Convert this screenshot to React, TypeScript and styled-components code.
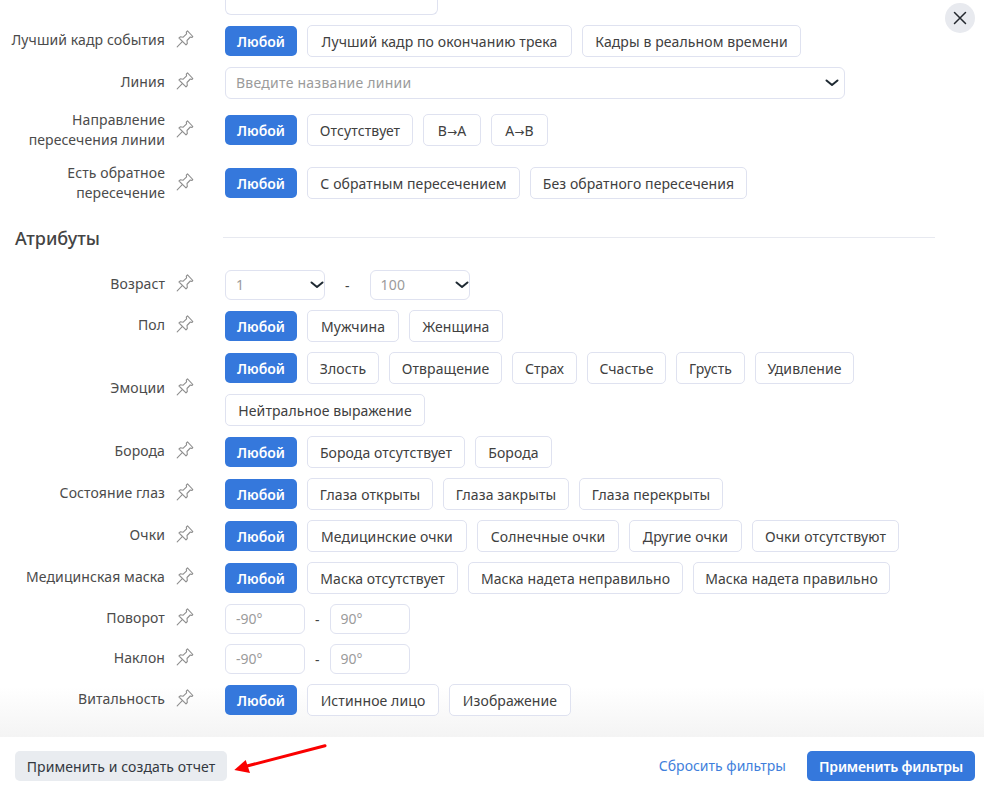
import React from "react";
import styled, { createGlobalStyle } from "styled-components";

const Global = createGlobalStyle`
  html, body { margin: 0; padding: 0; height: 100%; background: #fff; overflow: hidden; }
  body { font-family: "Noto Sans", "Open Sans", sans-serif; font-size: 14px; color: #444; }
  #root { height: 100%; }
  * { box-sizing: border-box; }
`;

const Page = styled.div`
  position: relative;
  width: 984px;
  height: 795px;
  display: flex;
  flex-direction: column;
`;
const Body = styled.div`
  position: relative;
  isolation: isolate;
  height: 737px;
  overflow: hidden;
  display: flex;
  flex-direction: column;
  gap: 10px;
`;
const Fade = styled.div`
  position: absolute;
  z-index: -1;
  left: 0;
  right: 0;
  bottom: 0;
  height: 50px;
  background: linear-gradient(to bottom, rgba(244, 244, 244, 0), #f4f4f4);
  pointer-events: none;
`;
const ClippedField = styled.div`
  width: 213px;
  height: 15px;
  margin-left: 225px;
  border: 1px solid #dfe2f0;
  border-top: none;
  border-radius: 0 0 6px 6px;
`;
const Row = styled.div<{ $top?: number }>`
  display: flex;
  align-items: center;
  min-height: 30px;
  margin-top: ${(p) => p.$top ?? 0}px;
`;
const Label = styled.div<{ $two?: boolean }>`
  width: 165px;
  flex: none;
  text-align: right;
  line-height: 20px;
  letter-spacing: 0.1px;
  color: #4b4b4b;
  position: relative;
  top: ${(p) => (p.$two ? "0" : "-1px")};
`;
const PinWrap = styled.span<{ $two?: boolean }>`
  width: 60px;
  flex: none;
  padding-left: 11px;
  display: flex;
  align-items: center;
  position: relative;
  top: ${(p) => (p.$two ? "-1px" : "-2px")};
`;
const Controls = styled.div`
  display: flex;
  flex-wrap: wrap;
  align-items: center;
  gap: 10px;
  width: 700px;
`;
const Chip = styled.button<{ $active?: boolean; $w: number }>`
  width: ${(p) => p.$w}px;
  height: ${(p) => (p.$active ? "30px" : "32px")};
  padding: 0;
  border: ${(p) => (p.$active ? "none" : "1px solid #dfe2f0")};
  border-radius: 5px;
  background: ${(p) => (p.$active ? "#3578dc" : "#fff")};
  color: ${(p) => (p.$active ? "#fff" : "#404040")};
  font: ${(p) => (p.$active ? 600 : 400)} 14px "Noto Sans", sans-serif;
  letter-spacing: ${(p) => (p.$active ? "0" : "0.1px")};
  white-space: nowrap;
`;
const ArrowGlyph = styled.span`
  font-family: "DejaVu Sans", sans-serif;
  font-size: 12px;
`;
const SelectBox = styled.div<{ $w: number; $h: number; $inset: number }>`
  position: relative;
  display: flex;
  align-items: center;
  width: ${(p) => p.$w}px;
  height: ${(p) => p.$h}px;
  padding: 0 0 2px 10px;
  border: 1px solid #dfe2f0;
  border-radius: 6px;
  color: #9b9b9b;
  letter-spacing: 0.25px;
  white-space: nowrap;

  svg {
    position: absolute;
    right: ${(p) => p.$inset}px;
    top: 50%;
    transform: translateY(-50%);
  }
`;
const AngleInput = styled.input`
  width: 80px;
  height: 30px;
  padding: 0 10px 2px;
  border: 1px solid #dfe2f0;
  border-radius: 6px;
  font: 14px "Noto Sans", sans-serif;
  &::placeholder { color: #9b9b9b; opacity: 1; }
`;
const RangeGroup = styled.div<{ $gap: number }>`
  display: flex;
  align-items: center;
  gap: ${(p) => p.$gap}px;
  color: #444;
`;
const SectionHead = styled.div`
  display: flex;
  align-items: center;
  height: 30px;
  margin-top: 11px;
  margin-bottom: 6px;
`;
const SectionTitle = styled.h3`
  margin: 0 0 2px;
  width: 223px;
  flex: none;
  padding-left: 15px;
  font-size: 18px;
  font-weight: 500;
  color: #444;
  line-height: 28px;
`;
const Rule = styled.div`
  width: 712px;
  height: 1px;
  background: #e7e9f0;
  position: relative;
  top: -2px;
`;
const CloseBtn = styled.button`
  position: absolute;
  top: 3px;
  left: 945px;
  width: 30px;
  height: 30px;
  padding: 0;
  border: none;
  border-radius: 50%;
  background: #e8eaef;
  display: flex;
  align-items: center;
  justify-content: center;
`;
const Footer = styled.div`
  height: 58px;
  padding: 14px 9px 0 15px;
  display: flex;
  align-items: flex-start;
  background: #fff;
`;
const BaseBtn = styled.button`
  height: 30px;
  border: none;
  border-radius: 5px;
  white-space: nowrap;
  font-family: "Noto Sans", sans-serif;
  font-size: 14px;
`;
const ReportBtn = styled(BaseBtn)`
  width: 212px;
  padding: 0;
  background: #e9ecf0;
  color: #33383f;
  font-weight: 400;
  letter-spacing: 0.1px;
`;
const ResetLink = styled.a`
  margin-left: auto;
  margin-right: 21px;
  line-height: 30px;
  color: #3f7fdc;
`;
const ApplyBtn = styled(BaseBtn)`
  width: 168px;
  padding: 0;
  background: #3578dc;
  color: #fff;
  font-weight: 600;
  letter-spacing: -0.2px;
`;
const ArrowSvg = styled.svg`
  position: absolute;
  left: 225px;
  top: 738px;
  pointer-events: none;
`;

const Pin = () => (
  <svg width="18" height="18" viewBox="0 0 18 18" fill="none" stroke="#8e8e8e" strokeWidth="1.1" strokeLinejoin="round" strokeLinecap="round">
    <path d="M11.5 0.8 L16.8 6.5 L15.8 7.5 L14.3 7 L11 10.5 L11.3 13.5 L10 14.8 L3 8 L4.3 6.8 L7.2 7.2 L10.6 3.8 L10.3 2.2 Z" />
    <path d="M6.3 11.7 L1.2 16.8" />
  </svg>
);

const Chevron = () => (
  <svg width="14" height="9" viewBox="0 0 14 9" fill="none" stroke="#1f2a33" strokeWidth="2" strokeLinecap="round" strokeLinejoin="round">
    <path d="M1.5 2 L7 6.5 L12.5 2" />
  </svg>
);

const FilterRow = ({ label, top, two, children }: { label: React.ReactNode; top?: number; two?: boolean; children: React.ReactNode }) => (
  <Row $top={top}>
    <Label $two={two}>{label}</Label>
    <PinWrap $two={two}><Pin /></PinWrap>
    {children}
  </Row>
);

type Item = [React.ReactNode, number];

const Chips = ({ items }: { items: Item[] }) => (
  <Controls>
    <Chip $active $w={72}>Любой</Chip>
    {items.map(([t, w], i) => <Chip key={i} $w={w}>{t}</Chip>)}
  </Controls>
);

const AngleRange = () => (
  <RangeGroup $gap={10}>
    <AngleInput placeholder="-90°" />
    <span>-</span>
    <AngleInput placeholder="90°" />
  </RangeGroup>
);

export default function App() {
  return (
    <Page>
      <Global />
      <Body>
        <ClippedField />
        <FilterRow label="Лучший кадр события">
          <Chips items={[["Лучший кадр по окончанию трека", 265], ["Кадры в реальном времени", 219]]} />
        </FilterRow>
        <FilterRow label="Линия">
          <SelectBox $w={620} $h={32} $inset={5}>Введите название линии<Chevron /></SelectBox>
        </FilterRow>
        <FilterRow top={1} two label={<>Направление<br />пересечения линии</>}>
          <Chips items={[["Отсутствует", 106], [<>B<ArrowGlyph>→</ArrowGlyph>A</>, 58], [<>A<ArrowGlyph>→</ArrowGlyph>B</>, 57]]} />
        </FilterRow>
        <FilterRow top={3} two label={<>Есть обратное<br />пересечение</>}>
          <Chips items={[["С обратным пересечением", 213], ["Без обратного пересечения", 217]]} />
        </FilterRow>
        <SectionHead>
          <SectionTitle>Атрибуты</SectionTitle>
          <Rule />
        </SectionHead>
        <FilterRow label="Возраст">
          <RangeGroup $gap={20}>
            <SelectBox $w={100} $h={30} $inset={0}>1<Chevron /></SelectBox>
            <span>-</span>
            <SelectBox $w={100} $h={30} $inset={0}>100<Chevron /></SelectBox>
          </RangeGroup>
        </FilterRow>
        <FilterRow label="Пол"><Chips items={[["Мужчина", 92], ["Женщина", 94]]} /></FilterRow>
        <FilterRow label="Эмоции">
          <Chips items={[["Злость", 72], ["Отвращение", 113], ["Страх", 65], ["Счастье", 79], ["Грусть", 69], ["Удивление", 99], ["Нейтральное выражение", 200]]} />
        </FilterRow>
        <FilterRow label="Борода"><Chips items={[["Борода отсутствует", 158], ["Борода", 77]]} /></FilterRow>
        <FilterRow label="Состояние глаз"><Chips items={[["Глаза открыты", 126], ["Глаза закрыты", 126], ["Глаза перекрыты", 144]]} /></FilterRow>
        <FilterRow label="Очки"><Chips items={[["Медицинские очки", 160], ["Солнечные очки", 142], ["Другие очки", 113], ["Очки отсутствуют", 147]]} /></FilterRow>
        <FilterRow label="Медицинская маска"><Chips items={[["Маска отсутствует", 151], ["Маска надета неправильно", 215], ["Маска надета правильно", 197]]} /></FilterRow>
        <FilterRow label="Поворот"><AngleRange /></FilterRow>
        <FilterRow label="Наклон"><AngleRange /></FilterRow>
        <FilterRow label="Витальность"><Chips items={[["Истинное лицо", 132], ["Изображение", 122]]} /></FilterRow>
        <Fade />
      </Body>
      <CloseBtn aria-label="Закрыть">
        <svg width="14" height="14" viewBox="0 0 14 14" fill="none" stroke="#23282e" strokeWidth="1.5" strokeLinecap="round">
          <path d="M1.5 1.5 L12.5 12.5 M12.5 1.5 L1.5 12.5" />
        </svg>
      </CloseBtn>
      <Footer>
        <ReportBtn>Применить и создать отчет</ReportBtn>
        <ResetLink>Сбросить фильтры</ResetLink>
        <ApplyBtn>Применить фильтры</ApplyBtn>
      </Footer>
      <ArrowSvg width="110" height="40" viewBox="0 0 110 40">
        <path d="M100 7.7 L22 28" stroke="#fa0000" strokeWidth="3" strokeLinecap="round" />
        <path d="M9.3 32 L20.7 22 L25 35 Z" fill="#fa0000" />
      </ArrowSvg>
    </Page>
  );
}
